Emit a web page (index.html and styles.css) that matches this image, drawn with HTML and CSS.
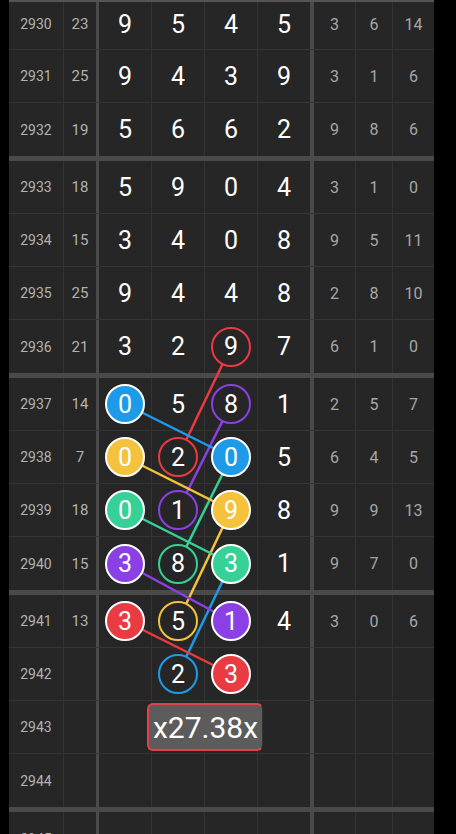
FILE: index.html
```html
<!DOCTYPE html>
<html lang="en">
<head>
    <meta charset="UTF-8">
    <meta name="viewport" content="width=device-width, initial-scale=1.0">
    <title>Trend Chart</title>
    <link rel="stylesheet" href="styles.css">
</head>
<body>
    <div class="board">
        <!-- Trend lines drawn over the grid -->
        <svg class="lines" width="425" height="834" viewBox="0 0 425 834">
            <line x1="222" y1="346.5" x2="169" y2="457" stroke="#ea3a42"/>
            <line x1="222" y1="404" x2="169" y2="510" stroke="#8b40e6"/>
            <line x1="222" y1="457" x2="169" y2="563.5" stroke="#35d196"/>
            <line x1="222" y1="510" x2="169" y2="621" stroke="#f4c23c"/>
            <line x1="222" y1="563.5" x2="169" y2="674" stroke="#1e9be8"/>
            <line x1="116" y1="404" x2="222" y2="457" stroke="#1e9be8"/>
            <line x1="116" y1="457" x2="222" y2="510" stroke="#f4c23c"/>
            <line x1="116" y1="510" x2="222" y2="563.5" stroke="#35d196"/>
            <line x1="116" y1="563.5" x2="222" y2="621" stroke="#8b40e6"/>
            <line x1="116" y1="621" x2="222" y2="674" stroke="#ea3a42"/>
        </svg>

        <div class="group">
            <div class="row first">
                <div class="issue">2930</div><div class="sum">23</div>
                <div class="d">9</div><div class="d">5</div><div class="d">4</div><div class="d last">5</div>
                <div class="r">3</div><div class="r">6</div><div class="r end">14</div>
            </div>
            <div class="row">
                <div class="issue">2931</div><div class="sum">25</div>
                <div class="d">9</div><div class="d">4</div><div class="d">3</div><div class="d last">9</div>
                <div class="r">3</div><div class="r">1</div><div class="r end">6</div>
            </div>
            <div class="row">
                <div class="issue">2932</div><div class="sum">19</div>
                <div class="d">5</div><div class="d">6</div><div class="d">6</div><div class="d last">2</div>
                <div class="r">9</div><div class="r">8</div><div class="r end">6</div>
            </div>
        </div>

        <div class="group">
            <div class="row">
                <div class="issue">2933</div><div class="sum">18</div>
                <div class="d">5</div><div class="d">9</div><div class="d">0</div><div class="d last">4</div>
                <div class="r">3</div><div class="r">1</div><div class="r end">0</div>
            </div>
            <div class="row">
                <div class="issue">2934</div><div class="sum">15</div>
                <div class="d">3</div><div class="d">4</div><div class="d">0</div><div class="d last">8</div>
                <div class="r">9</div><div class="r">5</div><div class="r end">11</div>
            </div>
            <div class="row">
                <div class="issue">2935</div><div class="sum">25</div>
                <div class="d">9</div><div class="d">4</div><div class="d">4</div><div class="d last">8</div>
                <div class="r">2</div><div class="r">8</div><div class="r end">10</div>
            </div>
            <div class="row">
                <div class="issue">2936</div><div class="sum">21</div>
                <div class="d">3</div><div class="d">2</div><div class="d"><span class="ring red">9</span></div><div class="d last">7</div>
                <div class="r">6</div><div class="r">1</div><div class="r end">0</div>
            </div>
        </div>

        <div class="group">
            <div class="row">
                <div class="issue">2937</div><div class="sum">14</div>
                <div class="d"><span class="ball blue">0</span></div><div class="d">5</div><div class="d"><span class="ring purple">8</span></div><div class="d last">1</div>
                <div class="r">2</div><div class="r">5</div><div class="r end">7</div>
            </div>
            <div class="row">
                <div class="issue">2938</div><div class="sum">7</div>
                <div class="d"><span class="ball yellow">0</span></div><div class="d"><span class="ring red">2</span></div><div class="d"><span class="ball blue">0</span></div><div class="d last">5</div>
                <div class="r">6</div><div class="r">4</div><div class="r end">5</div>
            </div>
            <div class="row">
                <div class="issue">2939</div><div class="sum">18</div>
                <div class="d"><span class="ball green">0</span></div><div class="d"><span class="ring purple">1</span></div><div class="d"><span class="ball yellow">9</span></div><div class="d last">8</div>
                <div class="r">9</div><div class="r">9</div><div class="r end">13</div>
            </div>
            <div class="row">
                <div class="issue">2940</div><div class="sum">15</div>
                <div class="d"><span class="ball purple">3</span></div><div class="d"><span class="ring green">8</span></div><div class="d"><span class="ball green">3</span></div><div class="d last">1</div>
                <div class="r">9</div><div class="r">7</div><div class="r end">0</div>
            </div>
        </div>

        <div class="group">
            <div class="row">
                <div class="issue">2941</div><div class="sum">13</div>
                <div class="d"><span class="ball red">3</span></div><div class="d"><span class="ring yellow">5</span></div><div class="d"><span class="ball purple">1</span></div><div class="d last">4</div>
                <div class="r">3</div><div class="r">0</div><div class="r end">6</div>
            </div>
            <div class="row">
                <div class="issue">2942</div><div class="sum"></div>
                <div class="d"></div><div class="d"><span class="ring blue">2</span></div><div class="d"><span class="ball red">3</span></div><div class="d last"></div>
                <div class="r"></div><div class="r"></div><div class="r end"></div>
            </div>
            <div class="row">
                <div class="issue">2943</div><div class="sum"></div>
                <div class="d"></div><div class="d"></div><div class="d"></div><div class="d last"></div>
                <div class="r"></div><div class="r"></div><div class="r end"></div>
                <!-- Odds badge over the digit columns -->
                <div class="odds">x27.38x</div>
            </div>
            <div class="row">
                <div class="issue">2944</div><div class="sum"></div>
                <div class="d"></div><div class="d"></div><div class="d"></div><div class="d last"></div>
                <div class="r"></div><div class="r"></div><div class="r end"></div>
            </div>
        </div>

        <div class="group">
            <div class="row">
                <div class="issue">2945</div><div class="sum"></div>
                <div class="d"></div><div class="d"></div><div class="d"></div><div class="d last"></div>
                <div class="r"></div><div class="r"></div><div class="r end"></div>
            </div>
        </div>
    </div>
</body>
</html>
```

FILE: styles.css
```css
/* General Styles */
body {
    background-color: #000;
    margin: 0;
    font-family: Roboto, "Liberation Sans", sans-serif;
    overflow: hidden;
    height: 834px;
}

/* Board */
.board {
    position: relative;
    width: 425px;
    margin-left: 9px;
    background-color: #262626;
}

.lines {
    position: absolute;
    top: 0;
    left: 0;
    z-index: 1;
    stroke-width: 2.5;
}

/* Rows */
.row {
    position: relative;
    display: grid;
    grid-template-columns: 55px 35px 53px 53px 53px 56px 42px 37px 41px;
    height: 52px;
    border-bottom: 1px solid #353535;
}

.row:last-child {
    height: 53px;
    border-bottom: 5px solid #4a4a4a;
}

.row.first {
    height: 47px;
    border-top: 2px solid #555;
}

.row > div {
    display: flex;
    align-items: center;
    justify-content: center;
    box-sizing: border-box;
    border-right: 1px solid #333;
}

.row.first > div {
    padding-bottom: 3px;
}

/* Cell Styles */
.issue {
    color: #b2b2b2;
    font-size: 14px;
}

.sum {
    color: #b2b2b2;
    font-size: 15px;
}

.row > .sum {
    border-right: 3px solid #4a4a4a;
}

.d {
    color: #fff;
    font-size: 25px;
}

.row > .d.last {
    border-right: 4px solid #4a4a4a;
}

.r {
    color: #a6a6a6;
    font-size: 16px;
}

.row > .r.end {
    border-right: none;
}

/* Balls */
.ball, .ring {
    position: relative;
    z-index: 2;
    display: flex;
    align-items: center;
    justify-content: center;
    width: 36px;
    height: 36px;
    border-radius: 50%;
}

.ball {
    border: 2px solid #fff;
}

.ring {
    border: 2px solid;
    background-color: #262626;
}

.ball.blue { background-color: #1e9be8; }
.ball.yellow { background-color: #f4c23c; }
.ball.green { background-color: #35d196; }
.ball.purple { background-color: #8b40e6; }
.ball.red { background-color: #ea3a42; }

.ring.blue { border-color: #1e9be8; }
.ring.yellow { border-color: #f4c23c; }
.ring.green { border-color: #35d196; }
.ring.purple { border-color: #8b40e6; }
.ring.red { border-color: #ea3a42; }

/* Odds Badge */
.odds {
    position: absolute;
    top: 2px;
    left: 138px;
    z-index: 2;
    width: 116px;
    height: 48px;
    box-sizing: border-box;
    border: 2px solid #e3404e;
    border-radius: 6px;
    background-color: #5c5c5c;
    color: #fff;
    font-size: 30px;
    text-align: center;
    line-height: 43px;
}
```
